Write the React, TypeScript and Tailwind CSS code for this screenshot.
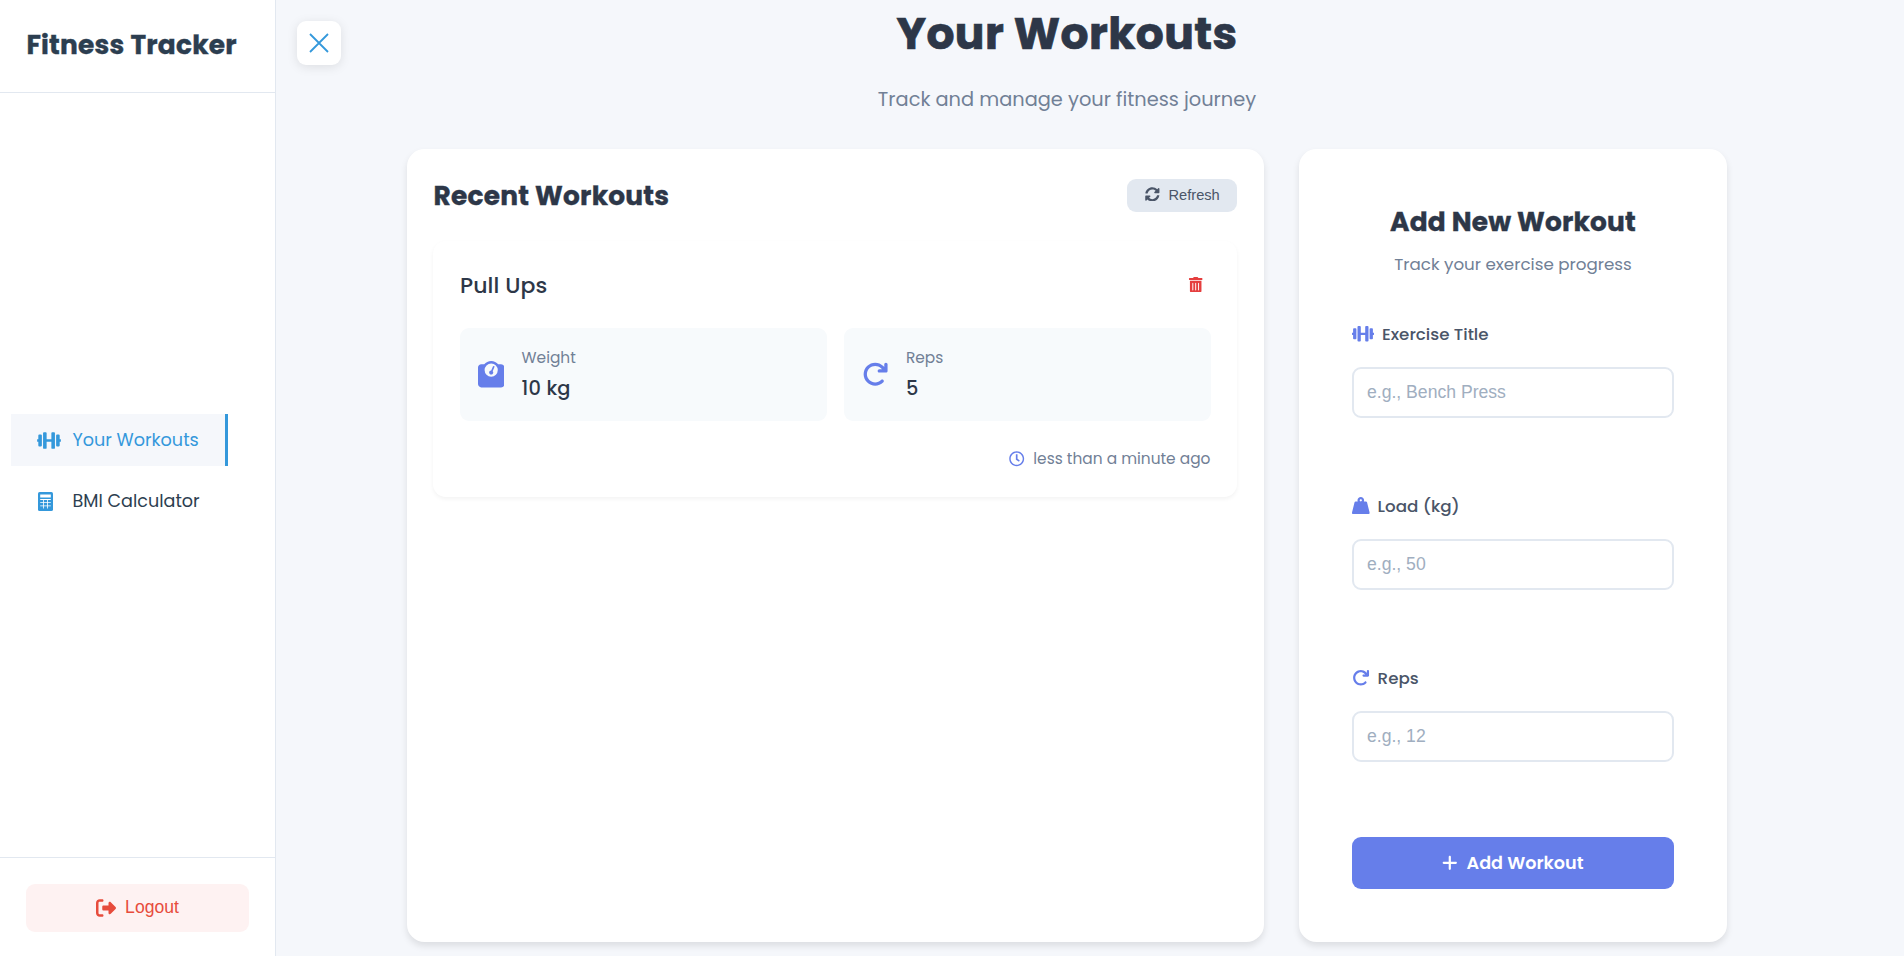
import type { ReactNode } from "react";
import { FaDumbbell, FaWeightHanging, FaTrashAlt, FaSyncAlt, FaRegClock } from "react-icons/fa";
import { FaArrowRotateRight, FaPlus, FaRightFromBracket, FaWeightScale } from "react-icons/fa6";

function CalculatorIcon() {
  return (
    <svg viewBox="0 0 15 19" className="mt-px ml-[0.5px] h-[19px] w-[15px] shrink-0" aria-hidden="true">
      <rect width="15" height="19" rx="1.6" fill="#3498db" />
      <path fill="#fff" d="M2.2 2.4h10.6v3.2h-10.6zM2.2 7h10.6v.9H2.2zM2.2 10.2h10.6v.9H2.2zM2.2 13.4h10.6v.9H2.2zM5 7h.8v9.6H5zM9.2 7h.8v9.6h-.8z" />
    </svg>
  );
}

function Field({ icon, label, placeholder }: { icon: ReactNode; label: string; placeholder: string }) {
  return (
    <div className="flex h-[172px] flex-col">
      <label className="flex h-[25px] items-center gap-[8px] text-[16.72px] font-medium text-[#4a5568]">
        <span className="flex -translate-y-px text-[17.6px] text-[#667eea]">{icon}</span>
        {label}
      </label>
      <input
        placeholder={placeholder}
        className="mt-5 h-[51px] w-full rounded-[9px] border-2 border-[#e2e8f0] bg-white px-[13px] font-['Liberation_Sans',Arial,sans-serif] text-[17.6px] placeholder:text-[#a0aec0]"
      />
    </div>
  );
}

function Stat({ icon, label, value }: { icon: ReactNode; label: string; value: string }) {
  return (
    <div className="flex h-[93px] flex-1 items-center gap-[17.6px] rounded-[9px] bg-[#f7fafc] pl-[17.6px]">
      <span className="flex w-[26.4px] justify-center text-[26.4px] text-[#667eea]">{icon}</span>
      <div>
        <div className="mb-[2px] pt-px text-[15.4px] leading-[26px] text-[#718096]">{label}</div>
        <div className="text-[19.36px] leading-[32px] font-medium tracking-[0.2px] text-[#2d3748]">{value}</div>
      </div>
    </div>
  );
}

export default function App() {
  return (
    <div className="flex h-[956px] w-[1904px] overflow-hidden bg-[#f5f7fb] font-['Poppins','Inter',sans-serif]">
      <aside className="flex w-[276px] shrink-0 flex-col border-r border-[#e2e8f0] bg-white">
        <div className="flex h-[93px] items-center border-b border-[#e2e8f0] pb-0.5 pl-[26.4px] text-[26.4px] font-bold tracking-[0.25px] text-[#2c3e50] [-webkit-text-stroke:0.4px]">
          Fitness Tracker
        </div>
        <nav className="flex flex-1 flex-col gap-[9px] pt-[321px] pl-[11px] text-[17.6px]">
          <a className="flex h-[52px] w-[217px] items-center border-r-[3px] border-[#3498db] bg-[#f5f7fb] pl-[26px] text-[#3498db]">
            <span className="w-[35.5px]"><FaDumbbell className="h-[19px] w-6" /></span>
            Your Workouts
          </a>
          <a className="flex h-[52px] w-[217px] items-center pl-[26px] text-[#2c3e50]">
            <span className="w-[35.5px]"><CalculatorIcon /></span>
            BMI Calculator
          </a>
        </nav>
        <div className="h-[99px] border-t border-[#e2e8f0] px-[26px] pt-[26px]">
          <button className="flex h-12 w-[223px] items-center justify-center gap-[9px] rounded-[9px] bg-[#fef2f2] pb-0.5 font-['Liberation_Sans',Arial,sans-serif] text-[17.6px] text-[#e74c3c]">
            <FaRightFromBracket className="mt-0.5 h-5 w-5" />
            Logout
          </button>
        </div>
      </aside>

      <div className="w-[131px] shrink-0 pt-[21px] pl-[21px]">
        <button className="flex h-11 w-11 items-center justify-center rounded-[9px] bg-white shadow-[0_2px_11px_rgba(0,0,0,0.1)]">
          <svg viewBox="0 0 20 20" className="h-5 w-5" aria-hidden="true">
            <path d="M1 1l18 18M19 1L1 19" stroke="#3498db" strokeWidth="1.8" />
          </svg>
        </button>
      </div>

      <main className="w-[1320px] shrink-0">
        <header className="h-[149px] pt-px text-center">
          <h1 className="h-[66px] text-[44px] leading-[66px] font-bold tracking-[0.4px] text-[#2d3748] [-webkit-text-stroke:0.7px]">Your Workouts</h1>
          <p className="pt-[17px] text-[19.36px] leading-[31px] text-[#718096]">Track and manage your fitness journey</p>
        </header>

        <div className="flex h-[793px] gap-[35px]">
          <section className="w-[857px] rounded-[17.6px] bg-white pr-[27px] pl-[26px] shadow-[0_4px_7px_rgba(0,0,0,0.1)]">
            <div className="flex h-[92px] items-center justify-between">
              <h2 className="pt-0.5 pl-[0.5px] text-[26.4px] font-bold tracking-[0.25px] text-[#2d3748] [-webkit-text-stroke:0.4px]">Recent Workouts</h2>
              <button className="flex h-[33px] w-[110px] items-center gap-[8.8px] rounded-[9px] bg-[#e2e8f0] pl-[18px] font-['Liberation_Sans',Arial,sans-serif] text-[14.67px] text-[#4a5568]">
                <FaSyncAlt className="-mt-[2px]" />
                Refresh
              </button>
            </div>

            <article className="h-[256px] rounded-[13px] bg-white pt-[26px] pr-[26px] pl-[27px] shadow-[0_2px_4px_rgba(0,0,0,0.05)]">
              <div className="flex h-[35px] items-center justify-between pr-2">
                <h3 className="pt-0.5 text-[22px] font-medium tracking-[0.1px] text-[#2d3748]">Pull Ups</h3>
                <FaTrashAlt className="text-[15.4px] text-[#e53e3e]" />
              </div>
              <div className="mt-[26px] flex gap-[17.6px]">
                <Stat icon={<FaWeightScale />} label="Weight" value="10 kg" />
                <Stat icon={<FaArrowRotateRight />} label="Reps" value="5" />
              </div>
              <div className="mt-[25px] flex items-center justify-end gap-[8.8px] pr-[0.6px] text-[15.4px] leading-[26px] text-[#718096]">
                <FaRegClock className="text-[#667eea]" />
                less than a minute ago
              </div>
            </article>
          </section>

          <section className="w-[428px] rounded-[17.6px] bg-white px-[53px] shadow-[0_4px_7px_rgba(0,0,0,0.1)]">
            <div className="h-[173px] pt-[53px] text-center">
              <h2 className="text-[26.4px] leading-[40px] font-bold tracking-[0.2px] text-[#2d3748] [-webkit-text-stroke:0.4px]">Add New Workout</h2>
              <p className="pt-[8px] text-[16.72px] leading-[28px] text-[#718096]">Track your exercise progress</p>
            </div>
            <Field icon={<FaDumbbell className="h-[17.6px] w-[22px]" />} label="Exercise Title" placeholder="e.g., Bench Press" />
            <Field icon={<FaWeightHanging />} label="Load (kg)" placeholder="e.g., 50" />
            <Field icon={<FaArrowRotateRight />} label="Reps" placeholder="e.g., 12" />
            <button className="-mt-px flex h-[52px] w-full items-center justify-center gap-[7.5px] rounded-[9px] bg-[#667eea] pr-px text-[17.6px] font-semibold text-white">
              <FaPlus />
              Add Workout
            </button>
          </section>
        </div>
      </main>
    </div>
  );
}
